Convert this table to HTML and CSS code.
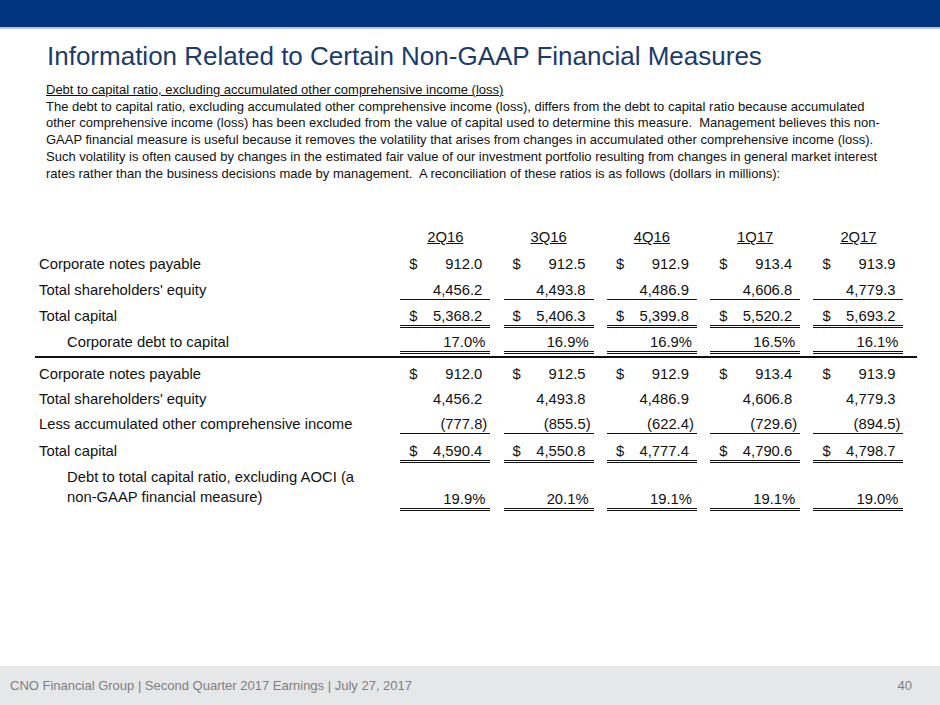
FILE: index.html
```html
<!DOCTYPE html>
<html>
<head>
<meta charset="utf-8">
<link rel="stylesheet" href="styles.css">
</head>
<body>
<div class="page">
  <div class="topbar"></div>
  <main class="main">
    <h1 class="title">Information Related to Certain Non-GAAP Financial Measures</h1>
    <div class="intro">
      <p class="subtitle">Debt to capital ratio, excluding accumulated other comprehensive income (loss)</p>
      <p class="para">The debt to capital ratio, excluding accumulated other comprehensive income (loss), differs from the debt to capital ratio because accumulated<br>other comprehensive income (loss) has been excluded from the value of capital used to determine this measure.&nbsp; Management believes this non-<br>GAAP financial measure is useful because it removes the volatility that arises from changes in accumulated other comprehensive income (loss).<br>Such volatility is often caused by changes in the estimated fair value of our investment portfolio resulting from changes in general market interest<br>rates rather than the business decisions made by management.&nbsp; A reconciliation of these ratios is as follows (dollars in millions):</p>
    </div>

    <div class="table">
      <div class="row head">
        <div class="label"></div>
        <div class="cell hcell"><span class="u">2Q16</span></div>
        <div class="cell hcell"><span class="u">3Q16</span></div>
        <div class="cell hcell"><span class="u">4Q16</span></div>
        <div class="cell hcell"><span class="u">1Q17</span></div>
        <div class="cell hcell"><span class="u">2Q17</span></div>
      </div>
      <div class="row wide">
        <div class="label">Corporate notes payable</div>
        <div class="cell"><span>$</span><span>912.0</span></div>
        <div class="cell"><span>$</span><span>912.5</span></div>
        <div class="cell"><span>$</span><span>912.9</span></div>
        <div class="cell"><span>$</span><span>913.4</span></div>
        <div class="cell"><span>$</span><span>913.9</span></div>
      </div>
      <div class="row">
        <div class="label">Total shareholders' equity</div>
        <div class="cell single"><span></span><span>4,456.2</span></div>
        <div class="cell single"><span></span><span>4,493.8</span></div>
        <div class="cell single"><span></span><span>4,486.9</span></div>
        <div class="cell single"><span></span><span>4,606.8</span></div>
        <div class="cell single"><span></span><span>4,779.3</span></div>
      </div>
      <div class="row">
        <div class="label">Total capital</div>
        <div class="cell double"><span>$</span><span>5,368.2</span></div>
        <div class="cell double"><span>$</span><span>5,406.3</span></div>
        <div class="cell double"><span>$</span><span>5,399.8</span></div>
        <div class="cell double"><span>$</span><span>5,520.2</span></div>
        <div class="cell double"><span>$</span><span>5,693.2</span></div>
      </div>
      <div class="row">
        <div class="label indent">Corporate debt to capital</div>
        <div class="cell double pct"><span></span><span>17.0%</span></div>
        <div class="cell double pct"><span></span><span>16.9%</span></div>
        <div class="cell double pct"><span></span><span>16.9%</span></div>
        <div class="cell double pct"><span></span><span>16.5%</span></div>
        <div class="cell double pct"><span></span><span>16.1%</span></div>
      </div>

      <div class="rule"></div>

      <div class="row first2">
        <div class="label">Corporate notes payable</div>
        <div class="cell"><span>$</span><span>912.0</span></div>
        <div class="cell"><span>$</span><span>912.5</span></div>
        <div class="cell"><span>$</span><span>912.9</span></div>
        <div class="cell"><span>$</span><span>913.4</span></div>
        <div class="cell"><span>$</span><span>913.9</span></div>
      </div>
      <div class="row tight">
        <div class="label">Total shareholders' equity</div>
        <div class="cell"><span></span><span>4,456.2</span></div>
        <div class="cell"><span></span><span>4,493.8</span></div>
        <div class="cell"><span></span><span>4,486.9</span></div>
        <div class="cell"><span></span><span>4,606.8</span></div>
        <div class="cell"><span></span><span>4,779.3</span></div>
      </div>
      <div class="row tight">
        <div class="label">Less accumulated other comprehensive income</div>
        <div class="cell single paren"><span></span><span>(777.8)</span></div>
        <div class="cell single paren"><span></span><span>(855.5)</span></div>
        <div class="cell single paren"><span></span><span>(622.4)</span></div>
        <div class="cell single paren"><span></span><span>(729.6)</span></div>
        <div class="cell single paren"><span></span><span>(894.5)</span></div>
      </div>
      <div class="row wide">
        <div class="label">Total capital</div>
        <div class="cell double"><span>$</span><span>4,590.4</span></div>
        <div class="cell double"><span>$</span><span>4,550.8</span></div>
        <div class="cell double"><span>$</span><span>4,777.4</span></div>
        <div class="cell double"><span>$</span><span>4,790.6</span></div>
        <div class="cell double"><span>$</span><span>4,798.7</span></div>
      </div>
      <div class="row last">
        <div class="label indent twoline">Debt to total capital ratio, excluding AOCI (a<br>non-GAAP financial measure)</div>
        <div class="cell double pct"><span></span><span>19.9%</span></div>
        <div class="cell double pct"><span></span><span>20.1%</span></div>
        <div class="cell double pct"><span></span><span>19.1%</span></div>
        <div class="cell double pct"><span></span><span>19.1%</span></div>
        <div class="cell double pct"><span></span><span>19.0%</span></div>
      </div>
    </div>
  </main>
  <footer class="footer">
    <span>CNO Financial Group | Second Quarter 2017 Earnings | July 27, 2017</span>
    <span>40</span>
  </footer>
</div>
</body>
</html>
```

FILE: styles.css
```css
* { box-sizing: border-box; }
html, body { margin: 0; padding: 0; }
body {
  font-family: "Liberation Sans", Arial, sans-serif;
  color: #111;
  background: #fff;
}
.page {
  width: 940px;
  height: 705px;
  display: flex;
  flex-direction: column;
  overflow: hidden;
}
.topbar {
  height: 29px;
  background: #00347f;
  border-bottom: 2px solid #b7c6dc;
  flex: none;
}
.main {
  flex: 1;
}
.title {
  margin: 11px 0 0 47px;
  font-size: 26px;
  line-height: 32px;
  font-weight: normal;
  color: #1b3b6c;
}
.intro {
  margin: 10px 0 0 46px;
  font-size: 13px;
  line-height: 16.7px;
  color: #111;
}
.intro p { margin: 0; }
.subtitle { text-decoration: underline; }

.table {
  margin: 47px 0 0 35px;
  font-size: 14.8px;
}
.row {
  display: grid;
  grid-template-columns: 352px repeat(5, 90px);
  column-gap: 13.3px;
  align-items: end;
  margin-top: 6px;
}
.row.head { margin-top: 0; }
.row.wide { margin-top: 7px; }
.row.first2 { margin-top: 8px; }
.row.tight { margin-top: 5px; }
.row.last { margin-top: 4px; }
.label {
  padding-left: 4px;
  line-height: 16px;
  padding-bottom: 4px;
  white-space: nowrap;
}
.label.indent { padding-left: 32px; }
.label.twoline { line-height: 20px; }
.cell {
  display: flex;
  justify-content: space-between;
  line-height: 16px;
  padding: 0 8px 1px 9px;
  border-bottom: 3px solid transparent;
  white-space: nowrap;
}
.cell.hcell { justify-content: center; padding: 0 0 1px 0; }
.u { text-decoration: underline; text-underline-offset: 1px; }
.cell.single {
  border-bottom: 1px solid #111;
  margin-bottom: 2px;
}
.cell.double { border-bottom: 3px double #111; }
.cell.pct { padding-right: 5px; }
.cell.paren { padding-right: 3px; }
.rule {
  width: 882px;
  height: 2px;
  background: #111;
  margin-top: 2px;
}
.footer {
  flex: none;
  height: 39px;
  background: #e6e7e8;
  color: #7f7f7f;
  font-size: 13px;
  display: flex;
  align-items: center;
  justify-content: space-between;
  padding: 0 28px 0 10px;
}
```
